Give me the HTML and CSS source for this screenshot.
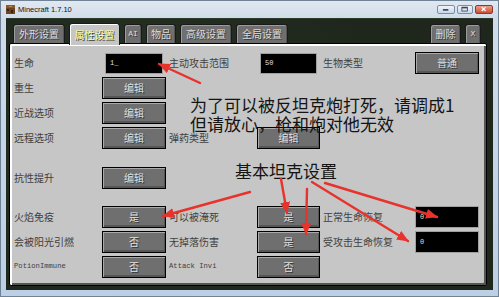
FILE: index.html
```html
<!DOCTYPE html>
<html lang="zh">
<head>
<meta charset="utf-8">
<title>Minecraft 1.7.10</title>
<link rel="stylesheet" href="styles.css">
</head>
<body>
<div class="window">
  <div class="titlebar">
    <svg class="app-icon" viewBox="0 0 9 9" width="9" height="9">
      <rect x="0" y="0" width="9" height="9" fill="#6b4423"/>
      <rect x="0" y="0" width="9" height="3" fill="#8a5a2e"/>
      <rect x="1" y="4" width="2" height="2" fill="#3b2512"/>
      <rect x="5" y="5" width="2" height="3" fill="#3b2512"/>
      <rect x="3" y="1" width="3" height="1" fill="#b98a52"/>
    </svg>
    <span class="title">Minecraft 1.7.10</span>
    <div class="ctrls">
      <span class="wbtn min"><svg viewBox="0 0 18 9" width="16" height="7"><rect x="5" y="4" width="7" height="2" fill="#2b3a4f"/></svg></span>
      <span class="wbtn max"><svg viewBox="0 0 16 9" width="14" height="7"><rect x="4" y="1.5" width="7" height="5" fill="none" stroke="#2b3a4f" stroke-width="1"/><rect x="4" y="1.5" width="7" height="1.5" fill="#2b3a4f"/></svg></span>
      <span class="wbtn close"><svg viewBox="0 0 18 9" width="16" height="7"><path d="M6 1.5 L11 6.5 M11 1.5 L6 6.5" stroke="#fff" stroke-width="1.6"/></svg></span>
    </div>
  </div>
  <div class="game">
    <div class="tabs">
      <div class="tab w52">外形设置</div>
      <div class="tab sel w51">属性设置</div>
      <div class="tab w18 latin">AI</div>
      <div class="tab w30">物品</div>
      <div class="tab w52">高级设置</div>
      <div class="tab w52">全局设置</div>
      <div class="tab w31 push">删除</div>
      <div class="tab w16 latin">X</div>
    </div>
    <div class="panel">
      <div class="row">
        <span class="lbl">生命</span>
        <span class="field">1_</span>
        <span class="lbl in">主动攻击范围</span>
        <span class="field">50</span>
        <span class="lbl in">生物类型</span>
        <span class="btn">普通</span>
      </div>
      <div class="row">
        <span class="lbl">重生</span>
        <span class="btn">编辑</span>
      </div>
      <div class="row">
        <span class="lbl">近战选项</span>
        <span class="btn">编辑</span>
      </div>
      <div class="row">
        <span class="lbl">远程选项</span>
        <span class="btn">编辑</span>
        <span class="lbl in">弹药类型</span>
        <span class="btn">编辑</span>
      </div>
      <div class="row gap-a">
        <span class="lbl">抗性提升</span>
        <span class="btn">编辑</span>
      </div>
      <div class="row gap-b">
        <span class="lbl">火焰免疫</span>
        <span class="btn">是</span>
        <span class="lbl in">可以被淹死</span>
        <span class="btn">是</span>
        <span class="lbl in">正常生命恢复</span>
        <span class="field wide">0</span>
      </div>
      <div class="row">
        <span class="lbl">会被阳光引燃</span>
        <span class="btn">否</span>
        <span class="lbl in">无掉落伤害</span>
        <span class="btn">是</span>
        <span class="lbl in">受攻击生命恢复</span>
        <span class="field wide">0</span>
      </div>
      <div class="row">
        <span class="lbl mono">PotionImmune</span>
        <span class="btn">否</span>
        <span class="lbl in mono">Attack Invi</span>
        <span class="btn">否</span>
      </div>
    </div>
  </div>

  <svg class="arrows" viewBox="0 0 499 297" width="499" height="297">
    <defs>
      <marker id="ah" markerUnits="userSpaceOnUse" markerWidth="12" markerHeight="10" refX="11" refY="5" orient="auto">
        <path d="M0 0 L12 5 L0 10 Z" fill="#e8322c"/>
      </marker>
    </defs>
    <g stroke="#e8322c" stroke-width="2.4" stroke-linecap="round" fill="none" marker-end="url(#ah)">
      <line x1="200" y1="83" x2="159" y2="64"/>
      <line x1="250" y1="192" x2="163" y2="216"/>
      <line x1="281" y1="179" x2="287" y2="213"/>
      <line x1="307" y1="189" x2="306" y2="234"/>
      <line x1="312" y1="182" x2="408" y2="241"/>
      <line x1="325" y1="183" x2="437" y2="217"/>
    </g>
  </svg>
  <div class="note note1">为了可以被反坦克炮打死，请调成1<br>但请放心，枪和炮对他无效</div>
  <div class="note note2">基本坦克设置</div>
</div>
</body>
</html>
```

FILE: styles.css
```css
* { box-sizing: border-box; }
html, body { margin: 0; padding: 0; }
body {
  width: 499px;
  height: 297px;
  overflow: hidden;
  font-family: "Noto Sans CJK SC", "Noto Sans", sans-serif;
}

.window {
  position: relative;
  width: 499px;
  height: 297px;
  display: flex;
  flex-direction: column;
  padding: 0 5px 6px 5px;
  background: linear-gradient(#e1e8f1, #cfdbe9 18px, #bccfe5 100%);
  border: 1px solid #6f8296;
}

.titlebar {
  height: 17px;
  display: flex;
  align-items: center;
  padding-left: 0;
}
.app-icon { margin-right: 3px; flex: none; }
.title {
  font-family: "Liberation Sans", Arial, sans-serif;
  font-size: 7.5px;
  color: #111;
}
.ctrls {
  margin-left: auto;
  display: flex;
  gap: 2px;
}
.wbtn {
  height: 9px;
  display: flex;
  align-items: center;
  justify-content: center;
  border-radius: 2px;
  border: 1px solid #7a8ea8;
  background: linear-gradient(#f2f6fb, #c8d6e8);
}
.wbtn.min { width: 18px; }
.wbtn.max { width: 16px; }
.wbtn.close {
  width: 18px;
  border-color: #8a3c2c;
  background: linear-gradient(#eba08d, #cf4b31);
}

.game {
  flex: 1;
  display: flex;
  flex-direction: column;
  padding: 5px 6px 4px 3px;
  background:
    radial-gradient(circle at 30% 40%, rgba(60,80,50,0.25), transparent 60%),
    #1f271d;
  border-top: 1px solid #2d3a2a;
}

.tabs {
  display: flex;
  gap: 4px;
  height: 19px;
  padding-left: 4px;
  padding-right: 6px;
  position: relative;
  z-index: 2;
}
.tab {
  height: 19px;
  display: flex;
  align-items: center;
  justify-content: center;
  background: #6f6f6f;
  border: 1px solid #1a1a1a;
  border-bottom: none;
  border-radius: 3px 3px 0 0;
  box-shadow: inset 1px 1px #9c9c9c, inset -1px 0 #555;
  color: #dcdcdc;
  font-size: 10px;
  line-height: 1;
  text-shadow: 1px 1px #3a3a3a;
}
.tab.latin { font-family: "Liberation Mono", monospace; font-size: 8px; }
.tab.sel {
  background: #c6c6c6;
  box-shadow: inset 1px 1px #fff;
  color: #ffffa0;
  text-shadow: 1px 1px #3f3f28;
  height: 22px;
  margin-top: -1px;
  margin-bottom: -2px;
}
.tab.push { margin-left: auto; }
.w52 { width: 52px; }
.w51 { width: 51px; }
.w18 { width: 18px; }
.w30 { width: 30px; }
.w31 { width: 31px; }
.w16 { width: 16px; }

.panel {
  flex: 1;
  display: flex;
  flex-direction: column;
  gap: 3px;
  padding: 8px 0 0 4px;
  background: #c6c6c6;
  border: 1px solid #000;
  border-radius: 2px;
  box-shadow: inset 2px 2px #fff, inset -2px -2px #555;
  position: relative;
  z-index: 1;
}

.row {
  display: grid;
  grid-template-columns: 88px 64px 91px 63px 95px 64px;
  height: 22px;
  align-items: center;
}
.row.gap-a { margin-top: 15px; }
.row.gap-b { margin-top: 14px; }

.lbl {
  font-size: 10px;
  line-height: 1;
  color: #404040;
  white-space: nowrap;
}
.lbl.in { padding-left: 3px; }
.lbl.mono {
  font-family: "Liberation Mono", monospace;
  font-size: 7.2px;
}

.btn {
  height: 22px;
  display: flex;
  align-items: center;
  justify-content: center;
  background: #6f6f6f;
  border: 1px solid #000;
  box-shadow: inset 1px 1px #a9a9a9, inset -1px -2px #565656;
  color: #e0e0e0;
  font-size: 10px;
  line-height: 1;
  text-shadow: 1px 1px #383838;
}

.field {
  height: 21px;
  margin: 0 3px;
  display: flex;
  align-items: center;
  padding-left: 4px;
  background: #000;
  border: 1px solid #a0a0a0;
  color: #e0e0e0;
  font-family: "Liberation Mono", monospace;
  font-size: 7px;
}
.field.wide { margin: 0; height: 22px; }

.arrows {
  position: absolute;
  left: -1px;
  top: -1px;
  z-index: 5;
  pointer-events: none;
}

.note {
  position: absolute;
  z-index: 4;
  color: #141414;
  font-family: "Noto Sans CJK SC", sans-serif;
  font-size: 17px;
  line-height: 19px;
  white-space: nowrap;
}
.note1 { left: 189px; top: 94px; }
.note2 { left: 234px; top: 160px; }
```
